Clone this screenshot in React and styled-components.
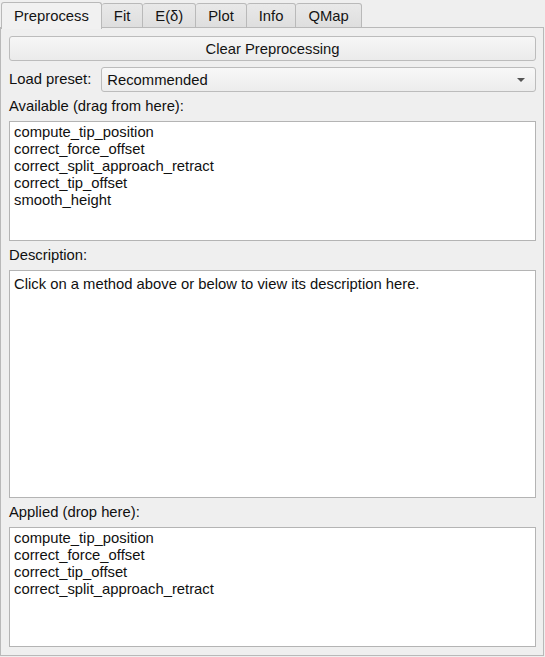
import React, { useState } from 'react';
import styled, { createGlobalStyle } from 'styled-components';

const GlobalStyle = createGlobalStyle`
  html, body {
    margin: 0;
    padding: 0;
    background: #efefef;
  }
  body {
    font-family: "Liberation Sans", Arial, sans-serif;
    font-size: 14.8px;
    color: #101010;
  }
`;

const Window = styled.div`
  width: 545px;
  height: 657px;
  background: #efefef;
  display: flex;
  flex-direction: column;
  overflow: hidden;
`;

const TabBar = styled.div`
  display: flex;
  align-items: flex-end;
  height: 28px;
  padding-left: 1px;
  position: relative;
  z-index: 1;
`;

const Tab = styled.div`
  height: ${(p) => (p.$active ? '27px' : '25px')};
  padding: 0 12px;
  box-sizing: border-box;
  display: flex;
  align-items: center;
  justify-content: center;
  border: 1px solid #b9b9b9;
  border-bottom: ${(p) => (p.$active ? 'none' : '1px solid #b9b9b9')};
  border-left: ${(p) => (p.$first || p.$active ? '1px solid #b9b9b9' : 'none')};
  border-radius: 3px 3px 0 0;
  background: ${(p) =>
    p.$active ? '#f1f1f1' : 'linear-gradient(#e9e9e9, #dedede)'};
  margin-bottom: ${(p) => (p.$active ? '-1px' : '0')};
  color: #141414;
  white-space: nowrap;
  cursor: default;
`;

const Pane = styled.div`
  width: 544px;
  height: 629px;
  box-sizing: border-box;
  border: 1px solid #b9b9b9;
  margin-top: -1px;
  padding: 8px 7px 8px 8px;
  display: flex;
  flex-direction: column;
  gap: 6px;
`;

const Button = styled.button`
  height: 25px;
  width: 100%;
  border: 1px solid #bcbcbc;
  border-radius: 3px;
  background: linear-gradient(#f6f6f6, #ebebeb);
  font: inherit;
  color: #141414;
  padding: 0;
  flex: none;
`;

const Row = styled.div`
  display: flex;
  align-items: center;
  gap: 10px;
  height: 25px;
  flex: none;
`;

const Label = styled.div`
  height: 17px;
  line-height: 17px;
  flex: none;
  white-space: nowrap;
`;

const Combo = styled.div`
  flex: 1;
  height: 25px;
  box-sizing: border-box;
  border: 1px solid #bcbcbc;
  border-radius: 3px;
  background: linear-gradient(#f8f8f8, #ececec);
  display: flex;
  align-items: center;
  justify-content: space-between;
  padding: 0 10px 0 5px;
`;

const Arrow = styled.span`
  width: 0;
  height: 0;
  border-left: 4px solid transparent;
  border-right: 4px solid transparent;
  border-top: 4px solid #555;
`;

const ListBox = styled.div`
  height: ${(p) => (p.$grow ? 'auto' : '120px')};
  flex: ${(p) => (p.$grow ? '1' : 'none')};
  box-sizing: border-box;
  border: 1px solid #b4b4b4;
  background: #fff;
  padding: ${(p) => (p.$grow ? '5px 4px' : '2px 4px')};
  line-height: 17px;
`;

const Item = styled.div`
  white-space: nowrap;
`;

const tabs = ['Preprocess', 'Fit', 'E(δ)', 'Plot', 'Info', 'QMap'];

const available = [
  'compute_tip_position',
  'correct_force_offset',
  'correct_split_approach_retract',
  'correct_tip_offset',
  'smooth_height',
];

const applied = [
  'compute_tip_position',
  'correct_force_offset',
  'correct_tip_offset',
  'correct_split_approach_retract',
];

export default function App() {
  const [active] = useState(0);

  return (
    <Window>
      <GlobalStyle />
      <TabBar>
        {tabs.map((t, i) => (
          <Tab key={t} $active={i === active} $first={i === 0}>
            {t}
          </Tab>
        ))}
      </TabBar>
      <Pane>
        <Button>Clear Preprocessing</Button>
        <Row>
          <Label>Load preset:</Label>
          <Combo>
            <span>Recommended</span>
            <Arrow />
          </Combo>
        </Row>
        <Label>Available (drag from here):</Label>
        <ListBox>
          {available.map((m) => (
            <Item key={m}>{m}</Item>
          ))}
        </ListBox>
        <Label>Description:</Label>
        <ListBox $grow>
          <Item>Click on a method above or below to view its description here.</Item>
        </ListBox>
        <Label>Applied (drop here):</Label>
        <ListBox>
          {applied.map((m) => (
            <Item key={m}>{m}</Item>
          ))}
        </ListBox>
      </Pane>
    </Window>
  );
}
